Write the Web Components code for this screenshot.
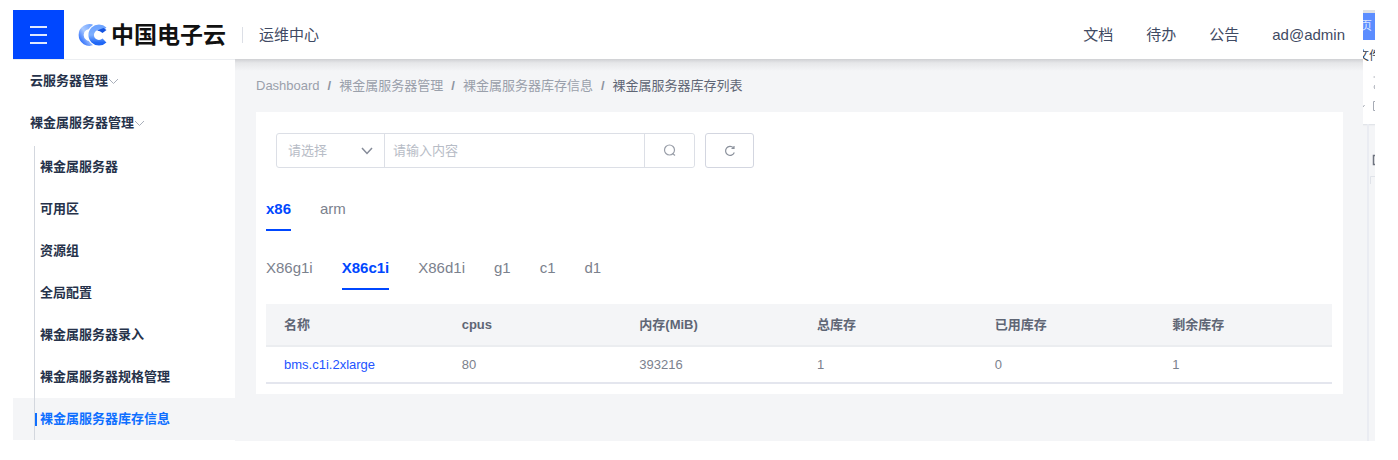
<!DOCTYPE html>
<html lang="zh-CN">
<head>
<meta charset="utf-8">
<title>运维中心</title>
<style>
  body {
    --primary: #0047ff;
    --page: #f4f5f7;
    --line: #dcdfe6;
    margin: 0;
    padding: 10px 23px 19px 13px;
    box-sizing: border-box;
    min-height: 100vh;
    display: flex;
    background: #fff;
    color: #6b7280;
    font: 13px/20px "Liberation Sans", "Noto Sans CJK SC", sans-serif;
  }
</style>
</head>
<body>
<ops-layout>
  <ops-header slot="header" user="ad@admin">运维中心</ops-header>
  <ops-menu slot="menu"></ops-menu>
  <ops-breadcrumb></ops-breadcrumb>
  <ops-card>
    <ops-search></ops-search>
    <ops-tabs items="x86,arm" active="x86"></ops-tabs>
    <ops-tabs items="X86g1i,X86c1i,X86d1i,g1,c1,d1" active="X86c1i"></ops-tabs>
    <ops-table></ops-table>
  </ops-card>
</ops-layout>
<ops-side-window></ops-side-window>

<script>
class OpsElement extends HTMLElement {
  constructor() {
    super();
    this.attachShadow({ mode: 'open' });
  }

  connectedCallback() {
    this.shadowRoot.innerHTML = this.render();
  }
}

class OpsLayout extends OpsElement {
  render() {
    return `
      <style>
        :host { flex: 1; min-width: 0; display: flex; flex-direction: column; }
        .body { flex: 1; display: flex; }
        main {
          flex: 1;
          min-width: 0;
          padding: 17px 20px 20px 21px;
          background: linear-gradient(#cfd0d3, #e6e7e9 4px, var(--page) 12px);
        }
      </style>
      <slot name="header"></slot>
      <div class="body">
        <slot name="menu"></slot>
        <main><slot></slot></main>
      </div>
    `;
  }
}

class OpsHeader extends OpsElement {
  render() {
    return `
      <style>
        :host {
          display: flex;
          align-items: center;
          height: 49px;
          background: #fff;
          color: #3f4a63;
          font-size: 15px;
        }
        .toggle {
          display: grid;
          place-items: center;
          width: 51px;
          height: 49px;
          padding: 0;
          border: 0;
          background: var(--primary);
          cursor: pointer;
        }
        .logo {
          display: flex;
          align-items: center;
          gap: 4px;
          margin-left: 13px;
          color: #111;
          font-size: 23px;
          font-weight: 700;
          line-height: 28px;
          text-decoration: none;
        }
        .title {
          margin-left: 16px;
          padding-left: 16px;
          border-left: 1px solid var(--line);
          line-height: 16px;
        }
        nav { display: flex; gap: 33px; margin: 0 18px 0 auto; }
        nav a { color: inherit; text-decoration: none; }
      </style>
      <button class="toggle" aria-label="菜单">
        <svg width="17" height="18" viewBox="0 0 17 18" stroke="#dfe8ff" stroke-width="2">
          <path d="M0 1h17M0 9h17M0 17h17"/>
        </svg>
      </button>
      <a class="logo" href="#">
        <svg width="30" height="22" viewBox="0 0 30 22" fill="none">
          <defs>
            <linearGradient id="back" x1="1" y1="0" x2="0" y2="1">
              <stop offset="0" stop-color="#6fa3ff"/>
              <stop offset=".5" stop-color="#a9c9ff"/>
              <stop offset="1" stop-color="#2a6bfb"/>
            </linearGradient>
            <linearGradient id="front" x1="0" y1="0" x2="0" y2="1">
              <stop offset="0" stop-color="#6ea4ff"/>
              <stop offset=".5" stop-color="#7fb0ff"/>
              <stop offset="1" stop-color="#1f66f5"/>
            </linearGradient>
          </defs>
          <path d="M16 3.500A8.300 8.300 0 1 0 16 18.500" stroke="url(#back)" stroke-width="5"/>
          <path d="M27 5.500A7.800 7.800 0 1 0 27 16.500" stroke="#fff" stroke-width="7"/>
          <path d="M27.500 5.500A7.800 7.800 0 1 0 27.500 16.500" stroke="url(#front)" stroke-width="5.500"/>
          <path d="M20 6.500L26.500 4L29.500 6L25.500 9Q23 6.500 20 6.500Z" fill="#1554e0"/>
        </svg>
        <span>中国电子云</span>
      </a>
      <span class="title"><slot></slot></span>
      <nav>
        <a href="#">文档</a>
        <a href="#">待办</a>
        <a href="#">公告</a>
        <a href="#">${this.getAttribute('user')}</a>
      </nav>
    `;
  }
}

class OpsMenu extends OpsElement {
  render() {
    const groups = ['云服务器管理', '裸金属服务器管理'];
    const items = ['裸金属服务器', '可用区', '资源组', '全局配置', '裸金属服务器录入', '裸金属服务器规格管理', '裸金属服务器库存信息'];
    const current = '裸金属服务器库存信息';

    return `
      <style>
        :host {
          display: block;
          flex: none;
          width: 222px;
          box-sizing: border-box;
          border-top: 1px solid #eceef1;
          color: #26324a;
          font-weight: 700;
        }
        .group {
          display: flex;
          align-items: center;
          width: 100%;
          height: 42px;
          padding: 0 0 0 17px;
          border: 0;
          background: none;
          color: inherit;
          font: inherit;
        }
        ul { list-style: none; margin: 2px 0 0; padding: 0; }
        li { padding-left: 21px; }
        li a {
          display: flex;
          align-items: center;
          height: 42px;
          border-left: 1px solid #d3d7de;
          color: inherit;
          text-decoration: none;
        }
        li a::before { content: ""; width: 2px; height: 13px; margin-right: 3px; }
        li.current { background: var(--page); color: #0f6fff; }
        li.current a::before { background: #0f6fff; }
      </style>
      ${groups.map(name => `
        <button class="group">${name}
          <svg width="11" height="7" viewBox="0 0 11 7" fill="none" stroke="#a9afba"><path d="M1 1l4.500 4.500L10 1"/></svg>
        </button>`).join('')}
      <ul>
        ${items.map(name => `<li class="${name === current ? 'current' : ''}"><a href="#">${name}</a></li>`).join('')}
      </ul>
    `;
  }
}

class OpsBreadcrumb extends OpsElement {
  render() {
    const path = ['Dashboard', '裸金属服务器管理', '裸金属服务器库存信息'];

    return `
      <style>
        :host { display: flex; color: #9aa0ab; }
        a { color: inherit; text-decoration: none; }
        a::after { content: "/"; margin: 0 8px; color: #8d94a1; font-weight: 700; }
        span { color: #5f6675; }
      </style>
      ${path.map(name => `<a href="#">${name}</a>`).join('')}
      <span>裸金属服务器库存列表</span>
    `;
  }
}

class OpsCard extends OpsElement {
  render() {
    return `
      <style>
        :host { display: block; margin-top: 16px; padding: 21px 11px 10px 10px; background: #fff; }
      </style>
      <slot></slot>
    `;
  }
}

class OpsSearch extends OpsElement {
  render() {
    return `
      <style>
        :host { display: flex; gap: 10px; margin: 0 0 21px 10px; }
        * { box-sizing: border-box; }
        .group {
          display: flex;
          width: 419px;
          height: 35px;
          border: 1px solid var(--line);
          border-radius: 3px;
        }
        .select { display: grid; align-items: center; width: 107px; }
        .select > * { grid-area: 1 / 1; }
        .select svg { justify-self: end; margin-right: 11px; pointer-events: none; }
        select, input {
          height: 33px;
          border: 0;
          outline: 0;
          background: none;
          color: #b7bcc6;
          font: inherit;
        }
        select { appearance: none; width: 100%; padding: 0 11px; }
        input { flex: 1; min-width: 0; padding: 0 8px; border: solid var(--line); border-width: 0 1px; }
        input::placeholder { color: #b7bcc6; }
        button { display: grid; place-items: center; padding: 0; border: 0; background: #fff; }
        .find { width: 49px; border-radius: 3px; }
        .reload { width: 49px; height: 35px; border: 1px solid #d3d6e0; border-radius: 3px; }
      </style>
      <div class="group">
        <label class="select">
          <select aria-label="查询条件"><option>请选择</option></select>
          <svg width="12" height="8" viewBox="0 0 12 8" fill="none" stroke="#858b98" stroke-width="1.500"><path d="M1 1l5 5.500L11 1"/></svg>
        </label>
        <input type="text" aria-label="查询内容" placeholder="请输入内容">
        <button class="find" aria-label="搜索">
          <svg width="13" height="13" viewBox="0 0 13 13" fill="none" stroke="#9a9fa9" stroke-width="1.200"><circle cx="6.500" cy="6" r="5"/><path d="M9.500 9.500l2.500 2"/></svg>
        </button>
      </div>
      <button class="reload" aria-label="刷新">
        <svg width="12" height="12" viewBox="0 0 12 12" fill="none" stroke="#8a909b" stroke-width="1.200"><path d="M9.300 2.700A4.500 4.500 0 1 0 10.300 7.500M10 1v2.500H7.500"/></svg>
      </button>
    `;
  }
}

class OpsTabs extends OpsElement {
  render() {
    const active = this.getAttribute('active');

    return `
      <style>
        :host { display: flex; gap: 29px; margin-bottom: 17px; font-size: 15px; }
        :host(:last-of-type) { margin-bottom: 14px; }
        button {
          padding: 0;
          border: 0;
          border-bottom: 2px solid transparent;
          background: none;
          color: #7b818d;
          font: inherit;
          line-height: 40px;
        }
        button[aria-selected="true"] { border-color: var(--primary); color: var(--primary); font-weight: 700; }
      </style>
      ${this.getAttribute('items').split(',').map(name =>
        `<button role="tab" aria-selected="${name === active}">${name}</button>`).join('')}
    `;
  }
}

class OpsTable extends OpsElement {
  render() {
    const columns = ['名称', 'cpus', '内存(MiB)', '总库存', '已用库存', '剩余库存'];
    const rows = [['bms.c1i.2xlarge', '80', '393216', '1', '0', '1']];

    return `
      <style>
        :host { display: block; }
        table { width: 100%; table-layout: fixed; border-collapse: separate; border-spacing: 0; }
        th, td { padding: 0 0 0 18px; text-align: left; }
        th { height: 41px; background: var(--page); border-bottom: 2px solid #ebedf0; color: #5f6675; }
        td { height: 35px; border-bottom: 2px solid #e4e6ee; color: #7b818d; }
        a { color: #2454ff; text-decoration: none; }
      </style>
      <table>
        <thead><tr>${columns.map(name => `<th>${name}</th>`).join('')}</tr></thead>
        <tbody>
          ${rows.map(([name, ...cells]) => `
            <tr><td><a href="#">${name}</a></td>${cells.map(cell => `<td>${cell}</td>`).join('')}</tr>`).join('')}
        </tbody>
      </table>
    `;
  }
}

// Edge of the document window that stays visible beside the console
class OpsSideWindow extends OpsElement {
  render() {
    return `
      <style>
        :host {
          display: flex;
          flex-direction: column;
          flex: none;
          width: 12px;
          overflow: hidden;
          color: #333b4a;
          font-size: 12px;
        }
        .tab {
          display: flex;
          justify-content: flex-end;
          padding-right: 3px;
          border-top: 3px solid #dfe1e4;
          background: #5c8dff;
          color: #dce7ff;
          line-height: 27px;
        }
        .file { display: flex; justify-content: center; white-space: nowrap; line-height: 32px; }
        svg { display: block; }
        .page { flex: 1; background: var(--page); box-shadow: inset 0 3px 2px -2px #dcdfe4; }
        .rule { height: 100%; margin-left: 4px; border-left: 2px solid #eaecf2; }
      </style>
      <div class="tab">页</div>
      <div class="file">文件</div>
      <svg width="12" height="52" viewBox="0 0 12 52" fill="none" stroke="#a6abb5">
        <path d="M10.500 5h1.500M12 13q-2 2 0 4M0 35l1.500-2M12 29.500h-1.500v9H12"/>
      </svg>
      <div class="page">
        <div class="rule">
          <svg width="6" height="60" viewBox="0 0 6 60" fill="none"><path d="M6 31.500H4.500v9H6" stroke="#6f7580" stroke-width="1.500"/><path d="M6 52.500H1.500V60" stroke="#e0e3e9"/></svg>
        </div>
      </div>
    `;
  }
}

customElements.define('ops-layout', OpsLayout);
customElements.define('ops-header', OpsHeader);
customElements.define('ops-menu', OpsMenu);
customElements.define('ops-breadcrumb', OpsBreadcrumb);
customElements.define('ops-card', OpsCard);
customElements.define('ops-search', OpsSearch);
customElements.define('ops-tabs', OpsTabs);
customElements.define('ops-table', OpsTable);
customElements.define('ops-side-window', OpsSideWindow);
</script>
</body>
</html>
